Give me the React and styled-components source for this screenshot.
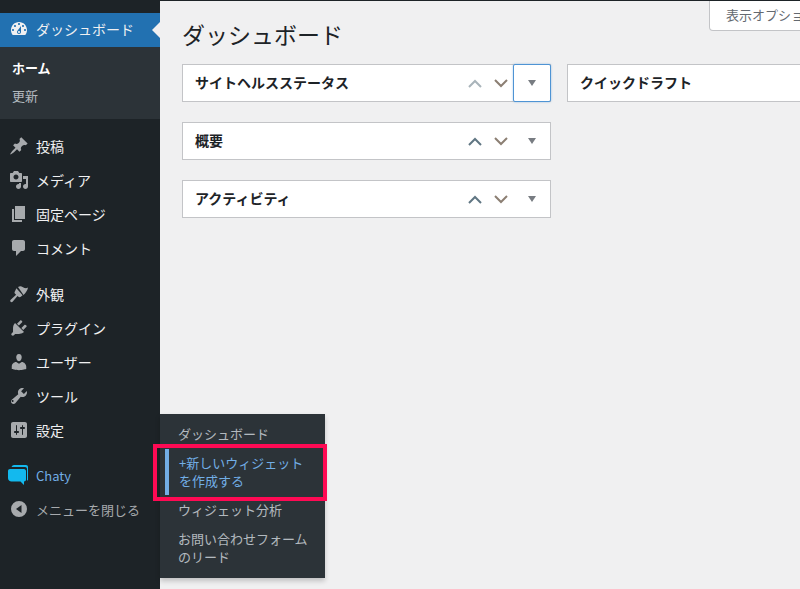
import React from "react";
import styled, { createGlobalStyle } from "styled-components";

const GlobalStyle = createGlobalStyle`
  html, body {
    margin: 0;
    padding: 0;
    height: 100%;
    overflow: hidden;
    background: #f0f0f1;
  }
  body {
    font-family: "Noto Sans CJK JP", "Liberation Sans", sans-serif;
    font-size: 14px;
  }
`;

const icons = {
  dashboard:
    "M3.76 16h12.48c1.1-1.37 1.76-3.11 1.76-5 0-4.42-3.58-8-8-8s-8 3.58-8 8c0 1.89.66 3.63 1.76 5zM10 4c.55 0 1 .45 1 1s-.45 1-1 1-1-.45-1-1 .45-1 1-1zM6 6c.55 0 1 .45 1 1s-.45 1-1 1-1-.45-1-1 .45-1 1-1zm8 0c.55 0 1 .45 1 1s-.45 1-1 1-1-.45-1-1 .45-1 1-1zm-5.37 5.55L12 7v6c0 1.1-.9 2-2 2s-2-.9-2-2c0-.57.24-1.08.63-1.45zM4 10c.55 0 1 .45 1 1s-.45 1-1 1-1-.45-1-1 .45-1 1-1zm12 0c.55 0 1 .45 1 1s-.45 1-1 1-1-.45-1-1 .45-1 1-1zm-5 3c0-.55-.45-1-1-1s-1 .45-1 1 .45 1 1 1 1-.45 1-1z",
  post: "M10.44 3.02l1.82-1.82 6.36 6.35-1.83 1.82c-1.05-.68-2.48-.57-3.41.36l-.75.75c-.92.93-1.04 2.35-.35 3.41l-1.83 1.82-2.41-2.41-2.8 2.79c-.42.42-3.38 2.71-3.8 2.29s1.86-3.39 2.28-3.81l2.79-2.79L4.1 9.36l1.83-1.82c1.05.69 2.48.57 3.4-.36l.75-.75c.93-.92 1.05-2.35.36-3.41z",
  media:
    "M13 11V4c0-.55-.45-1-1-1h-1.67L9 1H5L3.67 3H2c-.55 0-1 .45-1 1v7c0 .55.45 1 1 1h10c.55 0 1-.45 1-1zM7 4.5c1.38 0 2.5 1.12 2.5 2.5S8.38 9.5 7 9.5 4.5 8.38 4.5 7 5.62 4.5 7 4.5zM14 6h5v10.5c0 1.38-1.12 2.5-2.5 2.5S14 17.88 14 16.5s1.12-2.5 2.5-2.5c.17 0 .34.02.5.05V9h-3V6zm-4 8.05V13h2v3.5c0 1.38-1.12 2.5-2.5 2.5S7 17.88 7 16.5 8.12 14 9.5 14c.17 0 .34.02.5.05z",
  page: "M6 15V2h10v13H6zm-1 1h8v2H3V5h2v11z",
  comment:
    "M5 2h9c1.1 0 2 .9 2 2v7c0 1.1-.9 2-2 2h-2l-5 5v-5H5c-1.1 0-2-.9-2-2V4c0-1.1.9-2 2-2z",
  appearance:
    "M9 3l2-.8c2-.2 3 1.300 4.500 1.800 1.300.4 2.500 0 3.500-.4-.4 2.400-2 5.400-4.500 7.400zM7.400 4.200l6.200 7-1.800 1.600c-.8.7-1.700.6-2.400 0L8.500 12l-4.700 5.600c-.6.7-1.600.8-2.200.2-.6-.6-.5-1.500.1-2.100l5.400-4.900-1-1c-.7-.7-.8-1.700-.1-2.500z",
  plugin:
    "M13.11 4.36L9.87 7.6 8 5.73l3.24-3.24c.35-.34 1.05-.2 1.56.32.52.51.66 1.21.31 1.55zm-8 1.77l.91-1.12 9.01 9.01-1.19.84c-.71.71-2.63 1.16-3.82 1.16H6.14L4.9 17.26c-.59.59-1.54.59-2.12 0-.59-.58-.59-1.53 0-2.12l1.24-1.24v-3.88c0-1.13.4-3.19 1.09-3.89zm7.26 3.97l3.24-3.24c.34-.35 1.04-.21 1.55.31.52.51.66 1.21.31 1.55l-3.24 3.25z",
  users:
    "M10 9.25c-2.27 0-2.73-3.44-2.73-3.44C7 4.02 7.82 2 9.97 2c2.16 0 2.98 2.02 2.71 3.81 0 0-.41 3.44-2.68 3.44zm0 2.57L12.72 10c2.39 0 4.52 2.33 4.52 4.53v2.49s-3.65 1.13-7.24 1.13c-3.65 0-7.24-1.13-7.24-1.13v-2.49c0-2.25 1.94-4.48 4.47-4.48z",
  tools:
    "M16.68 9.77c-1.34 1.34-3.3 1.67-4.95.99l-5.41 6.52c-.99.99-2.59.99-3.57 0-.99-.98-.99-2.58 0-3.57l6.52-5.42c-.68-1.65-.35-3.61.99-4.95 1.28-1.28 3.12-1.62 4.72-1.06l-2.89 2.89 2.82 2.82 2.86-2.87c.53 1.58.18 3.39-1.09 4.67zM4.36 15.64c.39-.39.39-1.03 0-1.42-.39-.39-1.02-.39-1.41 0-.39.39-.39 1.03 0 1.42.39.39 1.02.39 1.41 0z",
  settings:
    "M18 16V4c0-1.1-.9-2-2-2H4c-1.1 0-2 .9-2 2v12c0 1.1.9 2 2 2h12c1.1 0 2-.9 2-2zM8 11h1c.55 0 1 .45 1 1s-.45 1-1 1H8v1.5c0 .28-.22.5-.5.5s-.5-.22-.5-.5V13H6c-.55 0-1-.45-1-1s.45-1 1-1h1V5.5c0-.28.22-.5.5-.5s.5.22.5.5V11zm5-2h-1c-.55 0-1-.45-1-1s.45-1 1-1h1V5.500c0-.28.22-.5.5-.5s.5.22.5.5V7h1c.55 0 1 .45 1 1s-.45 1-1 1h-1v5.500c0 .28-.22.5-.5.5s-.5-.22-.5-.5V9z",
  collapse: "M10 2a8 8 0 1 0 0 16 8 8 0 0 0 0-16zM12.500 6v8L7 10z",
};

const Page = styled.div`
  display: flex;
  height: 589px;
  width: 800px;
  overflow: hidden;
  position: relative;
`;

const Sidebar = styled.nav`
  width: 160px;
  flex-shrink: 0;
  background: #1d2327;
  padding-top: 13px;
  position: relative;
`;

const MenuGroup = styled.div`
  margin-bottom: 11px;
`;

const MenuItem = styled.div`
  position: relative;
  box-sizing: border-box;
  display: flex;
  align-items: center;
  gap: 7px;
  height: ${(p) => (p.$tall ? 35 : 34)}px;
  padding-left: 9px;
  padding-bottom: ${(p) => (p.$active ? 2 : 0)}px;
  background: ${(p) => (p.$active ? "#2271b1" : "transparent")};
  color: ${(p) => p.$color || "#f0f0f1"};
  font-size: ${(p) => p.$size || 14}px;

  ${(p) =>
    p.$active &&
    `&::after {
      content: "";
      position: absolute;
      right: 0;
      top: 50%;
      margin-top: -8px;
      border: 8px solid transparent;
      border-right-color: #f0f0f1;
      border-left-width: 0;
    }`}
`;

const MenuIcon = styled.svg`
  width: 20px;
  height: 20px;
  flex-shrink: 0;
  overflow: visible;
  fill: ${(p) => p.$fill || "#a7aaad"};
`;

const SubMenu = styled.div`
  background: #2c3338;
  height: 72px;
  padding-top: 7px;
  box-sizing: border-box;
  margin-bottom: 10px;
`;

const SubItem = styled.div`
  height: 28px;
  line-height: 28px;
  padding-left: 12px;
  font-size: 13px;
  color: ${(p) => (p.$current ? "#fff" : "rgba(240, 246, 252, 0.7)")};
  font-weight: ${(p) => (p.$current ? 700 : 400)};
`;

const Flyout = styled.div`
  position: absolute;
  left: 160px;
  top: 414px;
  width: 165px;
  height: 164px;
  box-sizing: border-box;
  background: #2c3338;
  box-shadow: 0 3px 5px rgba(0, 0, 0, 0.2);
  padding: 6px 0 0 5px;
  display: flex;
  flex-direction: column;
  gap: 1px;
  z-index: 2;
`;

const FlyoutItem = styled.div`
  box-sizing: border-box;
  padding: ${(p) => (p.$selected ? "5px 10px 5px 10px" : "5px 10px 5px 13px")};
  border-left: ${(p) => (p.$selected ? "4px solid #72aee6" : "none")};
  font-size: 13px;
  line-height: 18px;
  color: ${(p) => (p.$selected ? "#72aee6" : "rgba(240, 246, 252, 0.7)")};
`;

const Highlight = styled.div`
  position: absolute;
  left: 153px;
  top: 444px;
  width: 174px;
  height: 57px;
  box-sizing: border-box;
  border: 4px solid #ff0a54;
  z-index: 3;
`;

const Main = styled.main`
  flex: 1;
  min-width: 0;
  overflow: hidden;
  border-top: 1px solid #1d2327;
  padding-left: 22px;
`;

const Header = styled.header`
  display: flex;
  height: 63px;
`;

const Heading = styled.h1`
  margin: 0;
  padding-top: 16px;
  font-size: 23px;
  line-height: 34px;
  font-weight: 400;
  color: #1d2327;
  flex: 0 0 527px;
`;

const OptionsTab = styled.div`
  flex-shrink: 0;
  box-sizing: border-box;
  width: 130px;
  height: 30px;
  padding-left: 16px;
  background: #fff;
  border: 1px solid #c3c4c7;
  border-top: none;
  border-radius: 0 0 0 4px;
  font-size: 13px;
  line-height: 28px;
  color: #646970;
  white-space: nowrap;
`;

const Columns = styled.div`
  display: flex;
  gap: 16px;
  width: 800px;
`;

const Column = styled.div`
  width: 369px;
  flex-shrink: 0;
  display: flex;
  flex-direction: column;
  gap: 20px;
`;

const Postbox = styled.section`
  box-sizing: border-box;
  height: 38px;
  display: flex;
  align-items: center;
  background: #fff;
  border: 1px solid #c3c4c7;
`;

const BoxTitle = styled.h2`
  flex: 1;
  margin: 0;
  padding: 0 0 2px 12px;
  font-size: 14px;
  font-weight: 700;
  color: #1d2327;
`;

const HandleButton = styled.div`
  box-sizing: border-box;
  width: ${(p) => p.$width}px;
  height: 38px;
  margin: ${(p) => (p.$toggle ? "-1px -1px -1px 0" : "0")};
  display: flex;
  align-items: center;
  justify-content: center;
  border: 1px solid ${(p) => (p.$focused ? "#4f94d4" : "transparent")};
  border-radius: 2px;
  box-shadow: ${(p) => (p.$focused ? "0 0 2px rgba(79, 148, 212, 0.6)" : "none")};
  background: transparent;
`;

const Chevron = styled.svg`
  width: 14px;
  height: 9px;
  fill: none;
  stroke: ${(p) => p.$color};
  stroke-width: 2;
`;

const Caret = styled.span`
  width: 0;
  height: 0;
  border-left: 4px solid transparent;
  border-right: 4px solid transparent;
  border-top: 6px solid #787c82;
`;

const Icon = ({ name, fill }) => (
  <MenuIcon viewBox="0 0 20 20" $fill={fill}>
    <path d={icons[name]} fillRule="evenodd" />
  </MenuIcon>
);

const ChatyIcon = () => (
  <MenuIcon viewBox="1 0 20 20" $fill="#13b9ee">
    <path d="M6 0h12c1.200 0 2 .8 2 2v13l-1 .8V4c0-1.200-.8-2-2-2H3.500C4 .8 5 0 6 0z" />
    <path d="M2 4h14c1 0 2 1 2 2v8.500c0 1-.8 2-2 2V20l-3.500-3.500h-9C1.500 16.500 0 15 0 13V6c0-1.200.8-2 2-2z" />
  </MenuIcon>
);

const Widget = ({ title, upColor = "#607683", focused }) => (
  <Postbox>
    <BoxTitle>{title}</BoxTitle>
    <HandleButton $width={26}>
      <Chevron viewBox="0 0 14 9" $color={upColor}>
        <path d="M1 8l6-6 6 6" />
      </Chevron>
    </HandleButton>
    <HandleButton $width={25}>
      <Chevron viewBox="0 0 14 9" $color="#8c7f73">
        <path d="M1 1l6 6 6-6" />
      </Chevron>
    </HandleButton>
    <HandleButton $width={38} $toggle $focused={focused}>
      <Caret />
    </HandleButton>
  </Postbox>
);

const App = () => (
  <>
    <GlobalStyle />
    <Page>
      <Sidebar>
        <MenuItem $active>
          <Icon name="dashboard" fill="#f0f0f1" />
          ダッシュボード
        </MenuItem>
        <SubMenu>
          <SubItem $current>ホーム</SubItem>
          <SubItem>更新</SubItem>
        </SubMenu>
        <MenuGroup>
          <MenuItem>
            <Icon name="post" />
            投稿
          </MenuItem>
          <MenuItem>
            <Icon name="media" />
            メディア
          </MenuItem>
          <MenuItem>
            <Icon name="page" />
            固定ページ
          </MenuItem>
          <MenuItem>
            <Icon name="comment" />
            コメント
          </MenuItem>
        </MenuGroup>
        <MenuGroup>
          <MenuItem $tall>
            <Icon name="appearance" />
            外観
          </MenuItem>
          <MenuItem>
            <Icon name="plugin" />
            プラグイン
          </MenuItem>
          <MenuItem>
            <Icon name="users" />
            ユーザー
          </MenuItem>
          <MenuItem>
            <Icon name="tools" />
            ツール
          </MenuItem>
          <MenuItem>
            <Icon name="settings" />
            設定
          </MenuItem>
        </MenuGroup>
        <MenuItem $color="#72aee6" $size={13}>
          <ChatyIcon />
          Chaty
        </MenuItem>
        <MenuItem $color="#a7aaad" $size={13}>
          <Icon name="collapse" />
          メニューを閉じる
        </MenuItem>
      </Sidebar>
      <Flyout>
        <FlyoutItem>ダッシュボード</FlyoutItem>
        <FlyoutItem $selected>+新しいウィジェットを作成する</FlyoutItem>
        <FlyoutItem>ウィジェット分析</FlyoutItem>
        <FlyoutItem>お問い合わせフォームのリード</FlyoutItem>
      </Flyout>
      <Highlight />
      <Main>
        <Header>
          <Heading>ダッシュボード</Heading>
          <OptionsTab>表示オプション</OptionsTab>
        </Header>
        <Columns>
          <Column>
            <Widget title="サイトヘルスステータス" upColor="#a9b4ba" focused />
            <Widget title="概要" />
            <Widget title="アクティビティ" />
          </Column>
          <Column>
            <Postbox>
              <BoxTitle>クイックドラフト</BoxTitle>
            </Postbox>
          </Column>
        </Columns>
      </Main>
    </Page>
  </>
);

export default App;
